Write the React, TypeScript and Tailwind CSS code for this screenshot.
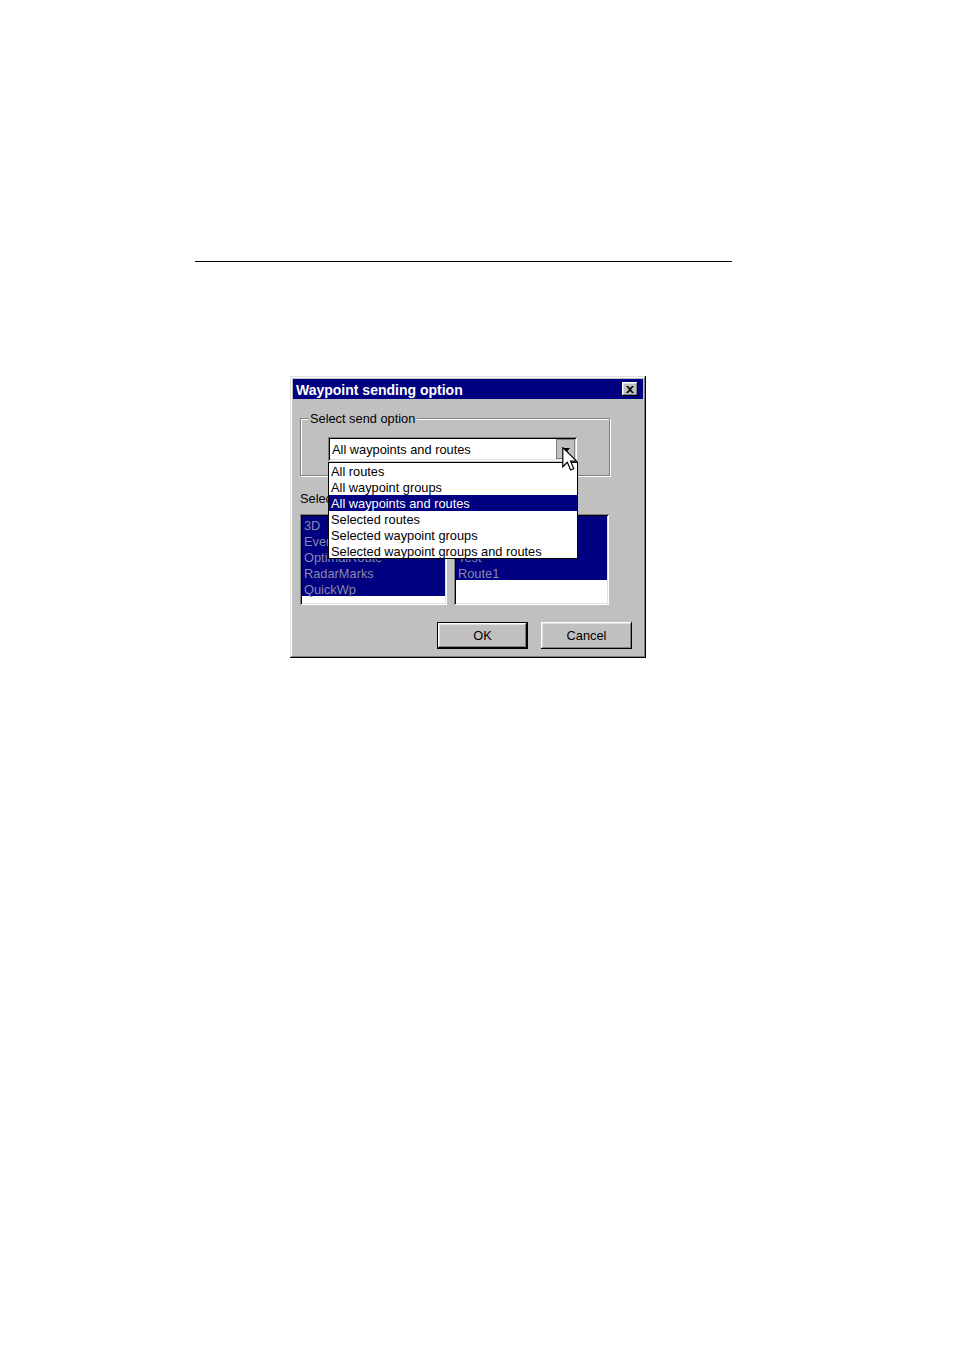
import React from "react";

const raised =
  "shadow-[inset_-1px_-1px_0_#000,inset_1px_1px_0_#fff,inset_-2px_-2px_0_#808080,inset_2px_2px_0_#dfdfdf]";
const windowBevel =
  "shadow-[inset_-1px_-1px_0_#000,inset_1px_1px_0_#dfdfdf,inset_-2px_-2px_0_#808080,inset_2px_2px_0_#fff]";
const sunken =
  "shadow-[inset_1px_1px_0_#808080,inset_-1px_-1px_0_#fff,inset_2px_2px_0_#000,inset_-2px_-2px_0_#dfdfdf]";

const sendOptions = [
  "All routes",
  "All waypoint groups",
  "All waypoints and routes",
  "Selected routes",
  "Selected waypoint groups",
  "Selected waypoint groups and routes",
];

const groups = ["3D", "Evening", "OptimalRoute", "RadarMarks", "QuickWp"];
const routes = ["Harbour", "Coast", "Test", "Route1"];

function ListBox({ items, width }: { items: string[]; width: string }) {
  return (
    <div className={`${width} h-[91px] bg-white p-[2px] ${sunken}`}>
      {items.map((it) => (
        <div key={it} className="h-[16px] leading-[16px] bg-[#000080] text-[#8888aa] pl-[2px] whitespace-nowrap">
          <span className="relative top-[1.5px]">{it}</span>
        </div>
      ))}
    </div>
  );
}

function Cursor() {
  return (
    <svg width="16" height="24" viewBox="0 0 13 20" className="absolute left-[234px] top-[10px] z-20">
      <path
        d="M0.5 0.5 L0.5 16.5 L4.3 12.8 L7 19.2 L9.6 18.1 L7 11.8 L12 11.8 Z"
        fill="#fff"
        stroke="#000"
        strokeWidth="1"
      />
    </svg>
  );
}

export default function App() {
  return (
    <div
      className="w-[954px] min-h-[1351px] bg-white pt-[261px] text-[12.8px] text-black"
      style={{ fontFamily: '"Liberation Sans", Arial, sans-serif' }}
    >
      <div className="ml-[195px] w-[537px] h-px bg-black"></div>

      {/* Dialog window */}
      <div className={`mt-[114px] ml-[290px] w-[356px] h-[282px] bg-[#c0c0c0] p-[3px] ${windowBevel}`}>
        {/* Title bar */}
        <div className="h-[20px] bg-[#000080] flex items-center justify-between pl-[3px] pr-[5px]">
          <span className="text-white font-bold text-[14px] leading-none mt-[1px]">Waypoint sending option</span>
          <div className={`w-[16px] h-[14px] bg-[#c0c0c0] flex items-center justify-center ${raised}`}>
            <svg width="8" height="7" viewBox="0 0 8 7">
              <path d="M0 0 H2 L4 2 L6 0 H8 L5 3.5 L8 7 H6 L4 5 L2 7 H0 L3 3.5 Z" fill="#000" />
            </svg>
          </div>
        </div>

        {/* Group box */}
        <div className="relative mt-[19px] ml-[7px] w-[310px] h-[58px] border border-[#808080] shadow-[inset_1px_1px_0_#fff,1px_1px_0_#fff]">
          <span className="absolute -top-[8px] left-[7px] px-[2px] bg-[#c0c0c0] leading-[15px]">Select send option</span>

          {/* Combo */}
          <div className={`relative mt-[18px] ml-[27px] w-[249px] h-[24px] bg-white p-[2px] flex ${sunken}`}>
            <div className="flex-1 pl-[2px] leading-[21px] whitespace-nowrap">All waypoints and routes</div>
            <div className="w-[19px] h-[20px] bg-[#c0c0c0] border border-[#808080] flex items-center justify-center">
              <svg width="7" height="4" viewBox="0 0 7 4" className="mt-[1px] ml-[1px]">
                <path d="M0 0 H7 L3.5 4 Z" fill="#000" />
              </svg>
            </div>
            <Cursor />

            {/* Open dropdown */}
            <div className="absolute top-[25px] left-0 w-[250px] h-[97px] bg-white border border-black z-10">
              {sendOptions.map((o, i) => (
                <div
                  key={o}
                  className={`h-[16px] leading-[17px] pl-[2px] whitespace-nowrap ${
                    i === 2 ? "bg-[#000080] text-white" : "text-black"
                  }`}
                >
                  {o}
                </div>
              ))}
            </div>
          </div>
        </div>

        {/* List labels */}
        <div className="mt-[15px] ml-[7px] flex leading-[15px]">
          <span className="w-[154px]">Select waypoint groups:</span>
          <span>Select routes:</span>
        </div>

        {/* Lists */}
        <div className="mt-[8px] ml-[7px] flex gap-[7px]">
          <ListBox items={groups} width="w-[147px]" />
          <ListBox items={routes} width="w-[155px]" />
        </div>

        {/* Buttons */}
        <div className="mt-[17px] flex justify-end gap-[13px] pr-[11px]">
          <div className="w-[91px] h-[27px] border border-black bg-[#c0c0c0]">
            <div className={`w-full h-full flex items-center justify-center ${raised}`}>OK</div>
          </div>
          <div className={`w-[91px] h-[27px] bg-[#c0c0c0] flex items-center justify-center ${raised}`}>Cancel</div>
        </div>
      </div>
    </div>
  );
}
